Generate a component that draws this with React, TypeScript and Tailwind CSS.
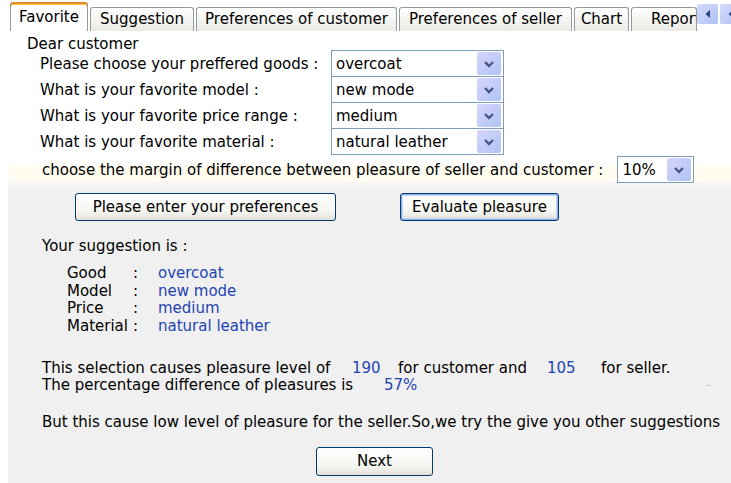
import type { ReactNode } from "react"

// Tab strip entries: label, width and whether the tab is the selected one
const tabs = [
  { label: "Favorite", width: "w-[78px]", active: true },
  { label: "Suggestion", width: "w-[104px]", active: false },
  { label: "Preferences of customer", width: "w-[201px]", active: false },
  { label: "Preferences of seller", width: "w-[173px]", active: false },
  { label: "Chart", width: "w-[55px]", active: false },
  { label: "Report", width: "w-[66px]", active: false },
]

const questions = [
  { label: "Please choose your preffered goods :", value: "overcoat" },
  { label: "What is your favorite model :", value: "new mode" },
  { label: "What is your favorite price range :", value: "medium" },
  { label: "What is your favorite material :", value: "natural leather" },
]

const suggestion = [
  { label: "Good", value: "overcoat" },
  { label: "Model", value: "new mode" },
  { label: "Price", value: "medium" },
  { label: "Material", value: "natural leather" },
]

function DropArrow() {
  return (
    <div className="flex h-full w-[24px] items-center justify-center rounded-[2px] bg-[linear-gradient(135deg,#d6d6fc,#c2cbf7_55%,#adc4f2)]">
      <svg width="12" height="8" viewBox="0 0 12 8">
        <path d="M2 2 L6 6 L10 2" fill="none" stroke="#43598a" strokeWidth="2.4" />
      </svg>
    </div>
  )
}

function Combo({ value, className }: { value: string; className: string }) {
  return (
    <div className={`flex h-[27px] items-center border border-[#7f9db9] bg-white py-[1px] pr-[2px] pl-[4px] ${className}`}>
      <span className="flex-1 leading-[18px] whitespace-nowrap">{value}</span>
      <DropArrow />
    </div>
  )
}

function XpButton({ children, className, focused }: { children: ReactNode; className: string; focused?: boolean }) {
  return (
    <div
      className={`flex items-center justify-center rounded-[3px] border border-[#003c74] bg-[linear-gradient(to_bottom,#ffffff,#f4f4f0_70%,#e2e0d8)] ${
        focused ? "shadow-[inset_0_0_0_1px_#8fb0ea,inset_0_0_0_2px_#c4d6f6]" : ""
      } ${className}`}
    >
      {children}
    </div>
  )
}

function ScrollArrow() {
  return (
    <div className="flex h-[20px] w-[21px] items-center justify-center rounded-[2px] bg-[linear-gradient(135deg,#d6dafc,#bfccf7_60%,#b0c3f2)]">
      <svg width="6" height="8" viewBox="0 0 6 8">
        <path d="M5 0 L0.5 4 L5 8 Z" fill="#2a3f80" />
      </svg>
    </div>
  )
}

export default function App() {
  return (
    <div className="relative h-[483px] w-[731px] overflow-hidden bg-white font-['DejaVu_Sans',sans-serif] text-[15px] text-black">
      {/* tab strip */}
      <div className="flex h-[31px] items-end pl-[10px]">
        {tabs.map((t) =>
          t.active ? (
            <div
              key={t.label}
              className={`${t.width} flex h-[29px] shrink-0 items-center justify-center rounded-t-[3px] border-x border-[#919b9c] bg-white pt-[2px] shadow-[inset_0_2px_0_#e68b2c,inset_0_3px_0_#ffc83c]`}
            >
              {t.label}
            </div>
          ) : (
            <div
              key={t.label}
              className={`${t.width} ml-[2px] flex h-[24px] shrink-0 items-center overflow-hidden rounded-t-[3px] border border-b-0 border-[#919b9c] bg-[linear-gradient(to_bottom,#ffffff,#f3f3ef_60%,#ebeae4)] ${
                t.label === "Report" ? "justify-start pl-[19px]" : "justify-center"
              }`}
            >
              <span className="whitespace-nowrap">{t.label}</span>
            </div>
          )
        )}
      </div>
      <div className="absolute top-[4px] left-[697px] flex gap-[2px]">
        <ScrollArrow />
        <ScrollArrow />
      </div>

      {/* page body */}
      <div className="ml-[8px] h-[452px] bg-[linear-gradient(to_bottom,#ffffff_0,#ffffff_132px,#fffbee_138px,#fffcf2_148px,#f6f5f2_152px,#f0f0f0_160px)] pt-[5px]">
        <div className="pl-[19px] leading-[16px]">Dear customer</div>

        <div className="mt-[-2px] flex flex-col">
          {questions.map((q, i) => (
            <div key={q.label} className={`flex items-center ${i > 0 ? "-mt-px" : ""}`}>
              <div className="w-[323px] pl-[32px] leading-[18px] whitespace-nowrap">{q.label}</div>
              <Combo value={q.value} className="w-[173px]" />
            </div>
          ))}
        </div>

        <div className="mt-px flex items-center">
          <div className="pl-[34px] leading-[18px] whitespace-nowrap">
            choose the margin of difference between pleasure of seller and customer :
          </div>
          <Combo value="10%" className="ml-[14px] w-[77px]" />
        </div>

        <div className="mt-[10px] flex">
          <XpButton className="ml-[67px] h-[28px] w-[261px]">Please enter your preferences</XpButton>
          <XpButton className="ml-[64px] h-[28px] w-[159px]" focused>
            Evaluate pleasure
          </XpButton>
        </div>

        <div className="mt-[16px] pl-[34px] leading-[18px]">Your suggestion is :</div>

        <div className="mt-[10px] flex flex-col pl-[59px] leading-[17.5px]">
          {suggestion.map((s) => (
            <div key={s.label} className="flex">
              <span className="w-[66px]">{s.label}</span>
              <span className="w-[25px]">:</span>
              <span className="text-[#1f45b0]">{s.value}</span>
            </div>
          ))}
        </div>

        <div className="mt-[25px] flex flex-col pl-[34px] leading-[17px] whitespace-nowrap">
          <div className="flex">
            <span className="w-[310px]">This selection causes pleasure level of</span>
            <span className="w-[46px] text-[#1f45b0]">190</span>
            <span className="w-[149px]">for customer and</span>
            <span className="w-[54px] text-[#1f45b0]">105</span>
            <span>for seller.</span>
          </div>
          <div className="flex items-center">
            <span className="w-[342px]">The percentage difference of pleasures is</span>
            <span className="text-[#1f45b0]">57%</span>
            <span className="mr-[20px] ml-auto h-[1px] w-[5px] bg-[#c8c8c8]" />
          </div>
        </div>

        <div className="mt-[19px] pl-[34px] leading-[18px] whitespace-nowrap">
          But this cause low level of pleasure for the seller.So,we try the give you other suggestions
        </div>

        <div className="mt-[16px] flex">
          <XpButton className="ml-[308px] h-[29px] w-[117px]">Next</XpButton>
        </div>
      </div>
    </div>
  )
}
